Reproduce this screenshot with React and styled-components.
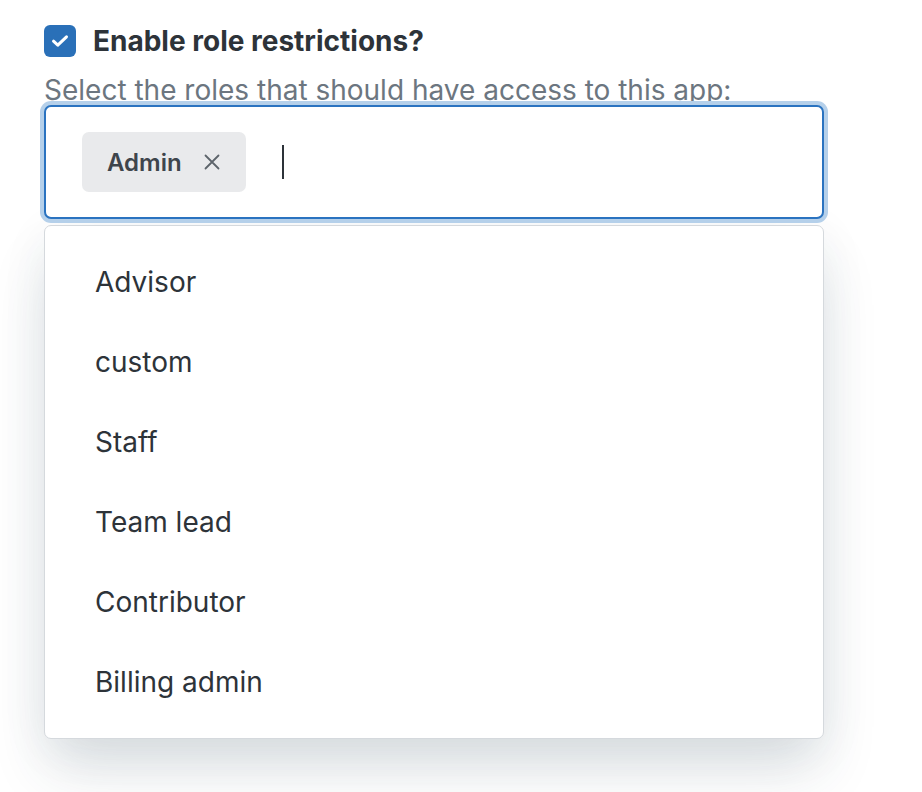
import React from "react";
import styled, { createGlobalStyle } from "styled-components";

const Global = createGlobalStyle`
  html, body { margin: 0; padding: 0; background: #ffffff; }
  body { font-family: Inter, "Noto Sans", "Liberation Sans", sans-serif; color: #2d3339; }
`;

const Page = styled.div`
  width: 922px;
  height: 792px;
  box-sizing: border-box;
  padding: 25px 0 0 44px;
  overflow: hidden;
`;

const Field = styled.div`
  width: 780px;
  display: flex;
  flex-direction: column;
`;

const CheckRow = styled.label`
  display: flex;
  align-items: center;
  gap: 17px;
  height: 32px;
`;

const CheckBox = styled.span`
  width: 32px;
  height: 32px;
  border-radius: 6px;
  background: #2a70b8;
  display: flex;
  align-items: center;
  justify-content: center;
  flex: none;
`;

const CheckTitle = styled.span`
  font-size: 28px;
  font-weight: 700;
  color: #2d3339;
`;

const Hint = styled.div`
  margin-top: 19px;
  font-size: 28px;
  line-height: 28px;
  color: #6c7680;
  height: 29px;
  white-space: nowrap;
`;

const InputBox = styled.div`
  position: relative;
  height: 114px;
  box-sizing: border-box;
  border: 2px solid #2a73c0;
  border-radius: 7px;
  box-shadow: 0 0 0 4px #b5d0ea;
  background: #fff;
  display: flex;
  align-items: center;
  padding: 0 0 0 36px;
  gap: 36px;
`;

const Chip = styled.span`
  display: flex;
  align-items: center;
  height: 60px;
  box-sizing: border-box;
  padding: 0 26px 0 25px;
  background: #e9eaec;
  border-radius: 7px;
  gap: 22px;
  font-size: 24px;
  font-weight: 600;
  color: #3e454c;
`;

const Caret = styled.span`
  width: 2px;
  height: 34px;
  background: #2d3339;
`;

const Menu = styled.ul`
  list-style: none;
  margin: 6px 0 0 0;
  padding: 16px 0;
  background: #fff;
  border: 1px solid #d5d9dd;
  border-radius: 7px;
  box-shadow: 0 34px 60px -6px rgba(40, 60, 80, 0.16), 0 10px 50px rgba(40, 60, 80, 0.06);
`;

const Item = styled.li`
  height: 80px;
  display: flex;
  align-items: center;
  padding-left: 50px;
  font-size: 28px;
  color: #2d3339;
`;

const roles = ["Advisor", "custom", "Staff", "Team lead", "Contributor", "Billing admin"];

export default function App() {
  return (
    <>
      <Global />
      <Page>
        <Field>
          <CheckRow>
            <CheckBox>
              <svg width="18" height="14" viewBox="0 0 18 14" fill="none">
                <path d="M2.5 7.2 L6.8 11.2 L15.5 2.8" stroke="#fff" strokeWidth="3" strokeLinecap="round" strokeLinejoin="round" />
              </svg>
            </CheckBox>
            <CheckTitle>Enable role restrictions?</CheckTitle>
          </CheckRow>
          <Hint>Select the roles that should have access to this app:</Hint>
          <InputBox>
            <Chip>
              Admin
              <svg width="16" height="16" viewBox="0 0 16 16" fill="none">
                <path d="M1.5 1.5 L14.5 14.5 M14.5 1.5 L1.5 14.5" stroke="#5d646b" strokeWidth="1.8" strokeLinecap="round" />
              </svg>
            </Chip>
            <Caret />
          </InputBox>
          <Menu>
            {roles.map((r) => (
              <Item key={r}>{r}</Item>
            ))}
          </Menu>
        </Field>
      </Page>
    </>
  );
}
